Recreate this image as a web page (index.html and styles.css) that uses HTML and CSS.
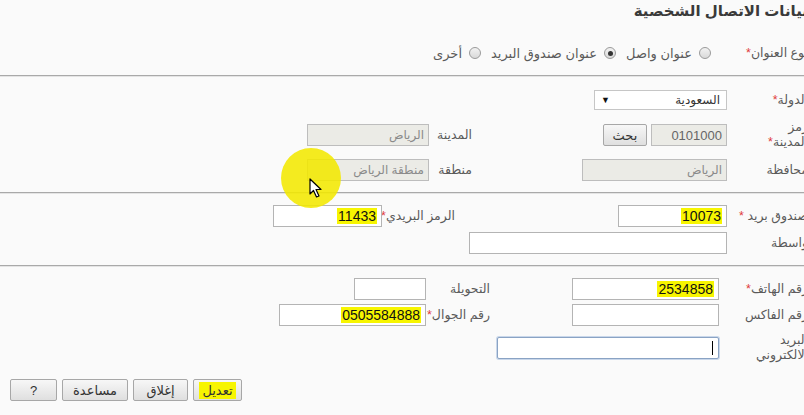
FILE: index.html
```html
<!DOCTYPE html>
<html lang="ar">
<head>
<meta charset="utf-8">
<title>بيانات الاتصال الشخصية</title>
<link rel="stylesheet" href="styles.css">
</head>
<body>
<div class="page">
  <h1 class="title">بيانات الاتصال الشخصية</h1>

  <div class="radio-row">
    <span class="lbl lbl-main">نوع العنوان<span class="req">*</span></span>
    <span class="opt first"><span class="radio"></span>عنوان واصل</span>
    <span class="opt"><span class="radio on"></span>عنوان صندوق البريد</span>
    <span class="opt"><span class="radio"></span>أخرى</span>
  </div>

  <div class="divider top"></div>

  <div class="grid g-addr">
    <div class="lbl">الدولة<span class="req">*</span></div>
    <div class="cell"><div class="select w133"><span class="sel-text">السعودية</span><span class="arrow">▼</span></div></div>
    <div></div>
    <div></div>

    <div class="lbl two">رمز<br>المدينة<span class="req">*</span></div>
    <div class="cell"><div class="field dis w76 num">0101000</div><button class="btn search">بحث</button></div>
    <div class="lbl">المدينة</div>
    <div class="cell"><div class="field dis w122">الرياض</div></div>

    <div class="lbl">محافظة</div>
    <div class="cell"><div class="field dis w145">الرياض</div></div>
    <div class="lbl">منطقة</div>
    <div class="cell"><div class="field dis w122">منطقة الرياض</div></div>
  </div>

  <div class="divider"></div>

  <div class="grid g-post">
    <div class="lbl">صندوق بريد <span class="req">*</span></div>
    <div class="cell"><div class="field w109 num"><span class="mark">10073</span></div></div>
    <div class="lbl">الرمز البريدي<span class="req">*</span></div>
    <div class="cell"><div class="field w109 num"><span class="mark">11433</span></div></div>

    <div class="lbl">واسطة</div>
    <div class="cell"><div class="field w258"></div></div>
    <div></div>
    <div></div>
  </div>

  <div class="divider"></div>

  <div class="grid g-phone">
    <div class="lbl">رقم الهاتف<span class="req">*</span></div>
    <div class="cell"><div class="field w147 num"><span class="mark">2534858</span></div></div>
    <div class="lbl">التحويلة</div>
    <div class="cell"><div class="field w72"></div></div>

    <div class="lbl">رقم الفاكس</div>
    <div class="cell"><div class="field w147"></div></div>
    <div class="lbl">رقم الجوال<span class="req">*</span></div>
    <div class="cell"><div class="field w147 num"><span class="mark">0505584888</span></div></div>

    <div class="lbl two">البريد<br>الالكتروني</div>
    <div class="cell"><div class="field focus w222"><span class="caret"></span></div></div>
    <div></div>
    <div></div>
  </div>

  <div class="actions">
    <button class="btn act w49"><span class="mark soft">تعديل</span></button>
    <button class="btn act w55">إغلاق</button>
    <button class="btn act w66">مساعدة</button>
    <button class="btn act w47">?</button>
  </div>

  <div class="spot"></div>
  <svg class="cursor" width="14" height="20" viewBox="0 0 14 20">
    <path d="M1 1 L1 16 L4.5 12.5 L7.5 19 L10 18 L7 11.5 L12 11.5 Z" fill="#fff" stroke="#000" stroke-width="1.2" stroke-linejoin="round"/>
  </svg>
</div>
</body>
</html>
```

FILE: styles.css
```css
* { box-sizing: border-box; }

body {
  margin: 0;
  background: #fafafa;
  overflow: hidden;
  font-family: "Liberation Sans", "DejaVu Sans", sans-serif;
}

.page {
  position: relative;
  width: 816px;
  height: 415px;
  direction: rtl;
}

.title {
  margin: 0;
  padding: 2px 8px 0 0;
  font-size: 15px;
  line-height: 18px;
  font-weight: bold;
  color: #3a3a3a;
}

.lbl {
  font-size: 12.5px;
  color: #5a5a5a;
  white-space: nowrap;
  line-height: 15px;
}

.req { color: #e03a3a; }

.radio-row {
  display: flex;
  align-items: center;
  height: 18px;
  margin-top: 24px;
}

.lbl-main {
  width: 89px;
  padding-right: 8px;
}

.opt {
  display: flex;
  align-items: center;
  gap: 7px;
  margin-right: 10px;
  font-size: 13px;
  color: #5a5a5a;
  white-space: nowrap;
}

.opt.first { margin-right: 16px; }

.radio {
  width: 12px;
  height: 12px;
  border-radius: 50%;
  border: 1px solid #9a9a9a;
  background: linear-gradient(#f2f2f2, #d9d9d9);
  display: inline-flex;
  align-items: center;
  justify-content: center;
}

.radio.on::after {
  content: "";
  width: 5px;
  height: 5px;
  border-radius: 50%;
  background: #333;
}

.divider {
  height: 1px;
  background: #a9a9a9;
  box-shadow: 0 1px 0 #e4e4e4;
  margin-bottom: 1px;
}

.divider.top { margin-top: 13px; }

.grid {
  display: grid;
  align-items: center;
}

.grid > .lbl:nth-child(4n+1) { padding-right: 8px; }

.g-addr {
  grid-template-columns: 89px 255px 43px 122px;
  grid-template-rows: 22px 22px 22px;
  row-gap: 13px;
  padding: 12px 0 11px;
}

.g-post {
  grid-template-columns: 89px 272px 73px 109px;
  grid-template-rows: 22px 22px;
  row-gap: 5px;
  padding: 11px 0 11px;
}

.g-phone {
  grid-template-columns: 97px 229px 64px 147px;
  grid-template-rows: 22px 22px 36px;
  row-gap: 4px;
  padding: 11px 0 0;
}

.cell {
  display: flex;
  align-items: center;
  gap: 4px;
}

.field {
  height: 22px;
  border: 1px solid #b4b4b4;
  background: #fff;
  padding: 0 4px;
  display: flex;
  align-items: center;
  font-size: 12px;
  color: #222;
  white-space: nowrap;
  overflow: hidden;
}

.field.num {
  font-size: 14px;
  color: #111;
}

.field.dis {
  background: #ebebe6;
  border-color: #bdbdbd;
  color: #8a8a8a;
}

.field.dis.num { color: #666; font-size: 13px; }

.field.focus {
  border-color: #8aa3c4;
  border-radius: 2px;
  box-shadow: 0 0 0 1px #c9d7ea;
}

.caret {
  width: 1px;
  height: 14px;
  background: #000;
  margin-right: 1px;
}

.mark {
  background: #f7f500;
  padding: 0 1px;
}

.select {
  height: 20px;
  border: 1px solid #c6c6c6;
  background: #fff;
  display: flex;
  align-items: center;
  justify-content: space-between;
  padding: 0 6px;
  font-size: 12px;
  color: #333;
}

.arrow { font-size: 9px; color: #111; }

.w72 { width: 72px; }
.w76 { width: 76px; }
.w109 { width: 109px; }
.w122 { width: 122px; }
.w133 { width: 133px; }
.w145 { width: 145px; }
.w147 { width: 147px; }
.w222 { width: 222px; }
.w258 { width: 258px; }

.btn {
  height: 22px;
  border: 1px solid #a7a7a7;
  border-radius: 2px;
  background: linear-gradient(#f7f7f7, #dfdfdf);
  font-family: "Liberation Sans", "DejaVu Sans", sans-serif;
  font-size: 13px;
  color: #333;
  padding: 0;
  display: inline-flex;
  align-items: center;
  justify-content: center;
}

.btn.search { width: 44px; }

.actions {
  display: flex;
  justify-content: flex-end;
  gap: 5px;
  padding-left: 10px;
  margin-top: 13px;
}

.btn.w47 { width: 47px; }
.btn.w49 { width: 49px; }
.btn.w55 { width: 55px; }
.btn.w66 { width: 66px; }

.mark.soft { padding: 1px 3px; }

.spot {
  position: absolute;
  left: 281px;
  top: 148px;
  width: 60px;
  height: 60px;
  border-radius: 50%;
  background: rgba(242, 232, 0, 0.88);
}

.cursor {
  position: absolute;
  left: 309px;
  top: 178px;
}
```
